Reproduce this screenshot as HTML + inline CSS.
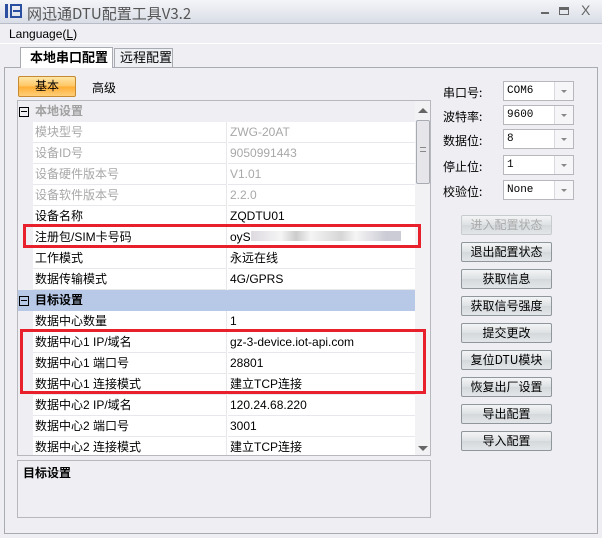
<!DOCTYPE html>
<html><head><meta charset="utf-8"><style>
*{margin:0;padding:0;box-sizing:border-box}
body{width:602px;height:538px;overflow:hidden;background:#eeeef3;font-family:"Liberation Sans","Noto Sans CJK SC",sans-serif;font-size:12px;color:#000;position:relative}
.abs{position:absolute}
.title{left:0;top:0;width:602px;height:24px;background:linear-gradient(#f4f5f8,#d9dde6);border-bottom:1px solid #b8bcc6}
.menu{left:0;top:24px;width:602px;height:20px;background:#eeeef3;border-bottom:1px solid #fff}
.panel{left:4px;top:67px;width:594px;height:467px;border:1px solid #a8abb2;background:#eeeef3}
.grid{left:17px;top:100px;width:414px;height:356px;border:1px solid #b6b8be;background:#fff;overflow:hidden}
.row{position:absolute;left:0;width:397px;height:21px;line-height:21px}
.row .g{position:absolute;left:0;top:0;width:15px;height:21px;background:#eeeef3}
.row .n{position:absolute;left:15px;top:0;width:194px;height:21px;border-right:1px solid #e8e8ec;border-bottom:1px solid #e8e8ec;padding-left:2px}
.row .v{position:absolute;left:210px;top:0;width:187px;height:21px;border-bottom:1px solid #e8e8ec;padding-left:2px}
.row.dis{color:#a8a8a8}
.hdr{position:absolute;left:0;width:397px;height:21px;line-height:21px;font-weight:bold;padding-left:17px}
.box{position:absolute;left:1px;top:6px;width:10px;height:10px;border:1px solid #000;}
.box:after{content:"";position:absolute;left:1px;top:3px;width:6px;height:1px;background:#000}
.btn{position:absolute;left:461px;width:91px;height:20px;border:1px solid #8f969c;border-radius:2px;background:linear-gradient(#f3f4f5,#dde1e3 50%,#d3d8db 50%,#e3e6e8);text-align:center;line-height:18px;font-family:"WenQuanYi Zen Hei","Noto Sans CJK SC",sans-serif;font-size:12px}
.lbl{position:absolute;left:443px;font-family:"WenQuanYi Zen Hei","Noto Sans CJK SC",sans-serif}
.cb{position:absolute;left:503px;width:71px;height:20px;border:1px solid #b6b8be;background:#fff;font-family:"Liberation Mono","WenQuanYi Zen Hei",monospace;font-size:11px;line-height:18px;padding-left:3px}
.cb:after{content:"";position:absolute;right:0;top:0;width:18px;height:18px;border-left:1px solid #d8dadf;background:#f6f6f8}
.cb i{position:absolute;right:6px;top:8px;border-left:3px solid transparent;border-right:3px solid transparent;border-top:3px solid #888;z-index:1}
.red{position:absolute;border:3px solid #e8202c}
</style></head><body>
<div class="abs title">
 <div class="abs" style="left:5px;top:4px;width:3px;height:14px;background:#2a4fa0"></div>
 <div class="abs" style="left:10px;top:4px;width:12px;height:14px;border:2px solid #2a4fa0"></div>
 <div class="abs" style="left:13px;top:10px;width:7px;height:2px;background:#2a4fa0"></div>
 <div class="abs" style="left:27px;top:3px;font-size:15px;color:#555;font-family:'WenQuanYi Zen Hei','Noto Sans CJK SC',sans-serif">网迅通DTU配置工具V3.2</div>
 <div class="abs" style="left:541px;top:12px;width:8px;height:2px;background:#666"></div>
 <div class="abs" style="left:559px;top:7px;width:10px;height:8px;border:1px solid #666;border-top-width:3px"></div>
 <div class="abs" style="left:581px;top:2px;font-size:14px;color:#666">X</div>
</div>
<div class="abs menu"><div class="abs" style="left:9px;top:3px">Language(<u>L</u>)</div></div>
<div class="abs" style="left:20px;top:47px;width:93px;height:21px;background:#fff;border:1px solid #a8abb2;border-bottom:none;font-weight:bold;font-size:13px;line-height:20px;padding-left:9px;z-index:2">本地串口配置</div>
<div class="abs" style="left:114px;top:48px;width:59px;height:19px;background:#eef0f4;border:1px solid #a8abb2;border-bottom:none;font-size:13px;line-height:18px;padding-left:5px">远程配置</div>
<div class="abs panel"></div>
<div class="abs" style="left:18px;top:76px;width:58px;height:21px;border:1px solid #c78a30;border-radius:2px;background:linear-gradient(#ffe7a8,#ffc461 50%,#ffad32 50%,#ffcf7a);text-align:center;line-height:19px">基本</div>
<div class="abs" style="left:92px;top:79px">高级</div>
<div class="abs grid">
 <div class="hdr" style="top:0;background:#eeeef3;color:#a0a0a0"><span class="box" style="border-color:#000"></span>本地设置</div>
 <div class="row dis" style="top:21px"><div class="g"></div><div class="n">模块型号</div><div class="v">ZWG-20AT</div></div>
 <div class="row dis" style="top:42px"><div class="g"></div><div class="n">设备ID号</div><div class="v">9050991443</div></div>
 <div class="row dis" style="top:63px"><div class="g"></div><div class="n">设备硬件版本号</div><div class="v">V1.01</div></div>
 <div class="row dis" style="top:84px"><div class="g"></div><div class="n">设备软件版本号</div><div class="v">2.2.0</div></div>
 <div class="row" style="top:105px"><div class="g"></div><div class="n">设备名称</div><div class="v">ZQDTU01</div></div>
 <div class="row" style="top:126px"><div class="g"></div><div class="n">注册包/SIM卡号码</div><div class="v">oyS<span style="display:inline-block;width:150px;height:10px;background:linear-gradient(90deg,#c8c2cc,#eee 20%,#aaa 30%,#eee 40%,#bbb 60%,#eee 70%,#aab 90%);opacity:.6"></span></div></div>
 <div class="row" style="top:147px"><div class="g"></div><div class="n">工作模式</div><div class="v">永远在线</div></div>
 <div class="row" style="top:168px"><div class="g"></div><div class="n">数据传输模式</div><div class="v">4G/GPRS</div></div>
 <div class="hdr" style="top:189px;background:#b7c9e6"><span class="box"></span>目标设置</div>
 <div class="row" style="top:210px"><div class="g"></div><div class="n">数据中心数量</div><div class="v">1</div></div>
 <div class="row" style="top:231px"><div class="g"></div><div class="n">数据中心1 IP/域名</div><div class="v">gz-3-device.iot-api.com</div></div>
 <div class="row" style="top:252px"><div class="g"></div><div class="n">数据中心1 端口号</div><div class="v">28801</div></div>
 <div class="row" style="top:273px"><div class="g"></div><div class="n">数据中心1 连接模式</div><div class="v">建立TCP连接</div></div>
 <div class="row" style="top:294px"><div class="g"></div><div class="n">数据中心2 IP/域名</div><div class="v">120.24.68.220</div></div>
 <div class="row" style="top:315px"><div class="g"></div><div class="n">数据中心2 端口号</div><div class="v">3001</div></div>
 <div class="row" style="top:336px"><div class="g"></div><div class="n">数据中心2 连接模式</div><div class="v">建立TCP连接</div></div>
 <div class="abs" style="left:397px;top:0;width:16px;height:356px;background:#f2f2f4"></div>
 <div class="abs" style="left:400px;top:7px;border-left:5px solid transparent;border-right:5px solid transparent;border-bottom:5px solid #666"></div>
 <div class="abs" style="left:398px;top:19px;width:14px;height:64px;border:1px solid #a8abb2;border-radius:2px;background:#e6e6ea"></div>
 <div class="abs" style="left:402px;top:46px;width:6px;height:5px;border-top:1px solid #888;border-bottom:1px solid #888"></div>
 <div class="abs" style="left:400px;top:345px;border-left:5px solid transparent;border-right:5px solid transparent;border-top:5px solid #666"></div>
</div>
<div class="red" style="left:23px;top:224px;width:398px;height:24px"></div>
<div class="red" style="left:20px;top:329px;width:406px;height:65px"></div>
<div class="abs" style="left:17px;top:460px;width:414px;height:58px;border:1px solid #b6b8be;background:#eeeef3"><div style="padding:3px 5px;font-weight:bold">目标设置</div></div>
<div class="lbl" style="top:84px">串口号:</div><div class="cb" style="top:81px">COM6<i></i></div>
<div class="lbl" style="top:108px">波特率:</div><div class="cb" style="top:105px">9600<i></i></div>
<div class="lbl" style="top:132px">数据位:</div><div class="cb" style="top:129px">8<i></i></div>
<div class="lbl" style="top:158px">停止位:</div><div class="cb" style="top:155px">1<i></i></div>
<div class="lbl" style="top:183px">校验位:</div><div class="cb" style="top:180px">None<i></i></div>
<div class="btn" style="top:215px;color:#aaa;border-color:#c8cbce">进入配置状态</div>
<div class="btn" style="top:242px">退出配置状态</div>
<div class="btn" style="top:269px">获取信息</div>
<div class="btn" style="top:296px">获取信号强度</div>
<div class="btn" style="top:323px">提交更改</div>
<div class="btn" style="top:350px">复位DTU模块</div>
<div class="btn" style="top:377px">恢复出厂设置</div>
<div class="btn" style="top:404px">导出配置</div>
<div class="btn" style="top:431px">导入配置</div>
</body></html>
